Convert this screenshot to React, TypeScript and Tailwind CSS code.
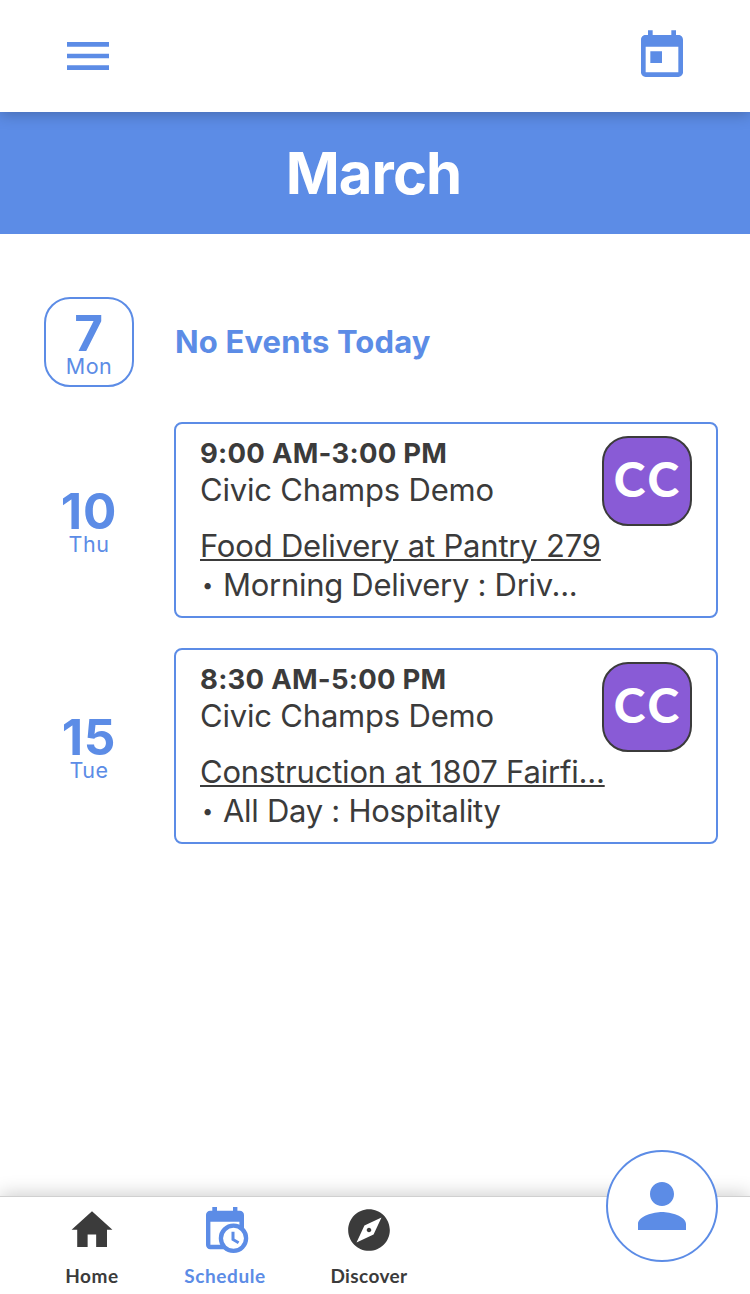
import React from 'react';

type Event = {
  day: string;
  weekday: string;
  time: string;
  org: string;
  title: string;
  shift: string;
};

const events: Event[] = [
  {
    day: '10',
    weekday: 'Thu',
    time: '9:00 AM-3:00 PM',
    org: 'Civic Champs Demo',
    title: 'Food Delivery at Pantry 279',
    shift: 'Morning Delivery : Driv...',
  },
  {
    day: '15',
    weekday: 'Tue',
    time: '8:30 AM-5:00 PM',
    org: 'Civic Champs Demo',
    title: 'Construction at 1807 Fairfi...',
    shift: 'All Day : Hospitality',
  },
];

function Icon({ d, className }: { d: string; className: string }) {
  return (
    <svg viewBox="0 0 24 24" fill="currentColor" className={className}>
      <path d={d} />
    </svg>
  );
}

const menuPath = 'M3 18h18v-2H3v2zm0-5h18v-2H3v2zm0-7v2h18V6H3z';
const todayPath =
  'M19 3h-1V1h-2v2H8V1H6v2H5c-1.11 0-1.99.9-1.99 2L3 19c0 1.1.89 2 2 2h14c1.1 0 2-.9 2-2V5c0-1.1-.9-2-2-2zm0 16H5V8h14v11zM7 10h5v5H7z';
const homePath = 'M9.9 20.1v-6H14v6h5.200v-8.200h2.600L12 3l-9.800 8.900h2.700v8.200z';
const explorePath =
  'M12 10.9c-.61 0-1.1.49-1.1 1.1s.49 1.1 1.1 1.1c.61 0 1.1-.49 1.1-1.1s-.49-1.1-1.1-1.1zM12 2C6.48 2 2 6.48 2 12s4.48 10 10 10 10-4.48 10-10S17.52 2 12 2zm2.19 12.19L6 18l3.81-8.19L18 6l-3.81 8.19z';
const personPath =
  'M12 12c2.21 0 4-1.79 4-4s-1.79-4-4-4-4 1.79-4 4 1.79 4 4 4zm0 2c-2.67 0-8 1.34-8 4v2h16v-2c0-2.66-5.33-4-8-4z';

function ScheduleIcon() {
  return (
    <svg viewBox="0 0 50 50" fill="none" className="h-[50px] w-[50px]">
      <path
        fill="currentColor"
        fillRule="evenodd"
        d="M10.2 6.8h2.1V3H17v3.8h16V3h4.4v3.8h2.4A4.2 4.2 0 0 1 44 11v24H39.4V17.7H10.4v23H26v4.6H10.2A4.2 4.2 0 0 1 6 41.1V11a4.2 4.2 0 0 1 4.2-4.2z"
      />
      <circle cx="33.5" cy="34.3" r="12.6" fill="white" stroke="currentColor" strokeWidth="4.3" />
      <path d="M33 27.8v7.7l5.6 3.2" stroke="currentColor" strokeWidth="3" />
    </svg>
  );
}

function DayLabel({ day, weekday, today }: { day: string; weekday: string; today?: boolean }) {
  return (
    <div
      className={`flex h-[90px] w-[90px] shrink-0 flex-col items-center rounded-[26px] border-2 pt-3 text-[#5c8ce6] ${
        today ? 'border-[#5c8ce6]' : 'border-transparent'
      }`}
    >
      <span className="text-[49.5px] leading-[44px] font-bold tracking-[0.8px]">{day}</span>
      <span className="text-[21.5px] leading-[22px] tracking-[0.5px]">{weekday}</span>
    </div>
  );
}

function EventCard({ event }: { event: Event }) {
  return (
    <div className="flex h-[196px] w-[544px] justify-between rounded-lg border-2 border-[#5c8ce6] px-6 pt-[11px] text-[#3b3b3b]">
      <div className="w-[402px] tracking-[-0.2px] whitespace-nowrap">
        <p className="text-[27.5px] leading-[36px] font-bold tracking-[0.25px]">{event.time}</p>
        <p className="text-[31px] leading-[38px]">{event.org}</p>
        <p className="mt-[18px] text-[31px] leading-[38px] underline decoration-2 underline-offset-[2px]">
          {event.title}
        </p>
        <p className="flex text-[31px] leading-[40px] tracking-[-0.28px] [font-feature-settings:'calt'_0]">
          <span className="w-[23px] pl-[2px] text-[20px]">•</span>
          {event.shift}
        </p>
      </div>
      <div className="mt-px flex h-[90px] w-[90px] shrink-0 items-center justify-center rounded-[26px] border-2 border-[#3b3b3b] bg-[#895bd6] pb-1 pl-0.5 font-['Lato',sans-serif] text-[48px] leading-none font-black tracking-[3px] text-white">
        CC
      </div>
    </div>
  );
}

export default function App() {
  return (
    <div className="flex h-[1294px] w-[750px] flex-col overflow-hidden bg-white font-['Inter',sans-serif]">
      <header className="relative z-10 flex h-28 shrink-0 items-center justify-between bg-white px-[60px] text-[#5c8ce6] shadow-[0_2px_14px_rgba(0,0,0,0.25)]">
        <Icon d={menuPath} className="h-14 w-14" />
        <Icon d={todayPath} className="h-14 w-14" />
      </header>

      <div className="flex h-[122px] shrink-0 items-center justify-center bg-[#5c8ce6] pr-[3px]">
        <h1 className="text-[58px] leading-none font-bold tracking-[-0.9px] text-white">March</h1>
      </div>

      <main className="flex-1 pt-[63px] pl-11">
        <div className="flex items-center">
          <DayLabel day="7" weekday="Mon" today />
          <p className="ml-[41px] text-[31px] font-bold tracking-[0.15px] text-[#5c8ce6]">No Events Today</p>
        </div>
        <div className="mt-[35px] flex flex-col gap-[30px]">
          {events.map((event) => (
            <div key={event.day} className="flex items-center gap-10">
              <DayLabel day={event.day} weekday={event.weekday} />
              <EventCard event={event} />
            </div>
          ))}
        </div>
      </main>

      <nav className="relative flex h-[98px] shrink-0 border-t border-[#d0d0d0] bg-white pl-[22px] font-['Lato',sans-serif] text-[19px] leading-6 font-bold tracking-[0.6px] text-[#3b3b3b] shadow-[0_-2px_18px_rgba(0,0,0,0.2)]">
        <div className="flex w-[140px] flex-col items-center pt-2">
          <Icon d={homePath} className="h-[50px] w-[50px]" />
          <span className="mt-[9px]">Home</span>
        </div>
        <div className="flex w-[126px] flex-col items-center pt-[7px] text-[#5c8ce6]">
          <ScheduleIcon />
          <span className="mt-[10px]">Schedule</span>
        </div>
        <div className="flex w-[162px] flex-col items-center pt-2">
          <Icon d={explorePath} className="h-[50px] w-[50px]" />
          <span className="mt-[9px] tracking-[0.4px]">Discover</span>
        </div>
        <button className="absolute -top-[47px] right-8 flex h-28 w-28 items-center justify-center rounded-full border-2 border-[#5c8ce6] bg-white text-[#5c8ce6]">
          <Icon d={personPath} className="h-[72px] w-[72px]" />
        </button>
      </nav>
    </div>
  );
}
